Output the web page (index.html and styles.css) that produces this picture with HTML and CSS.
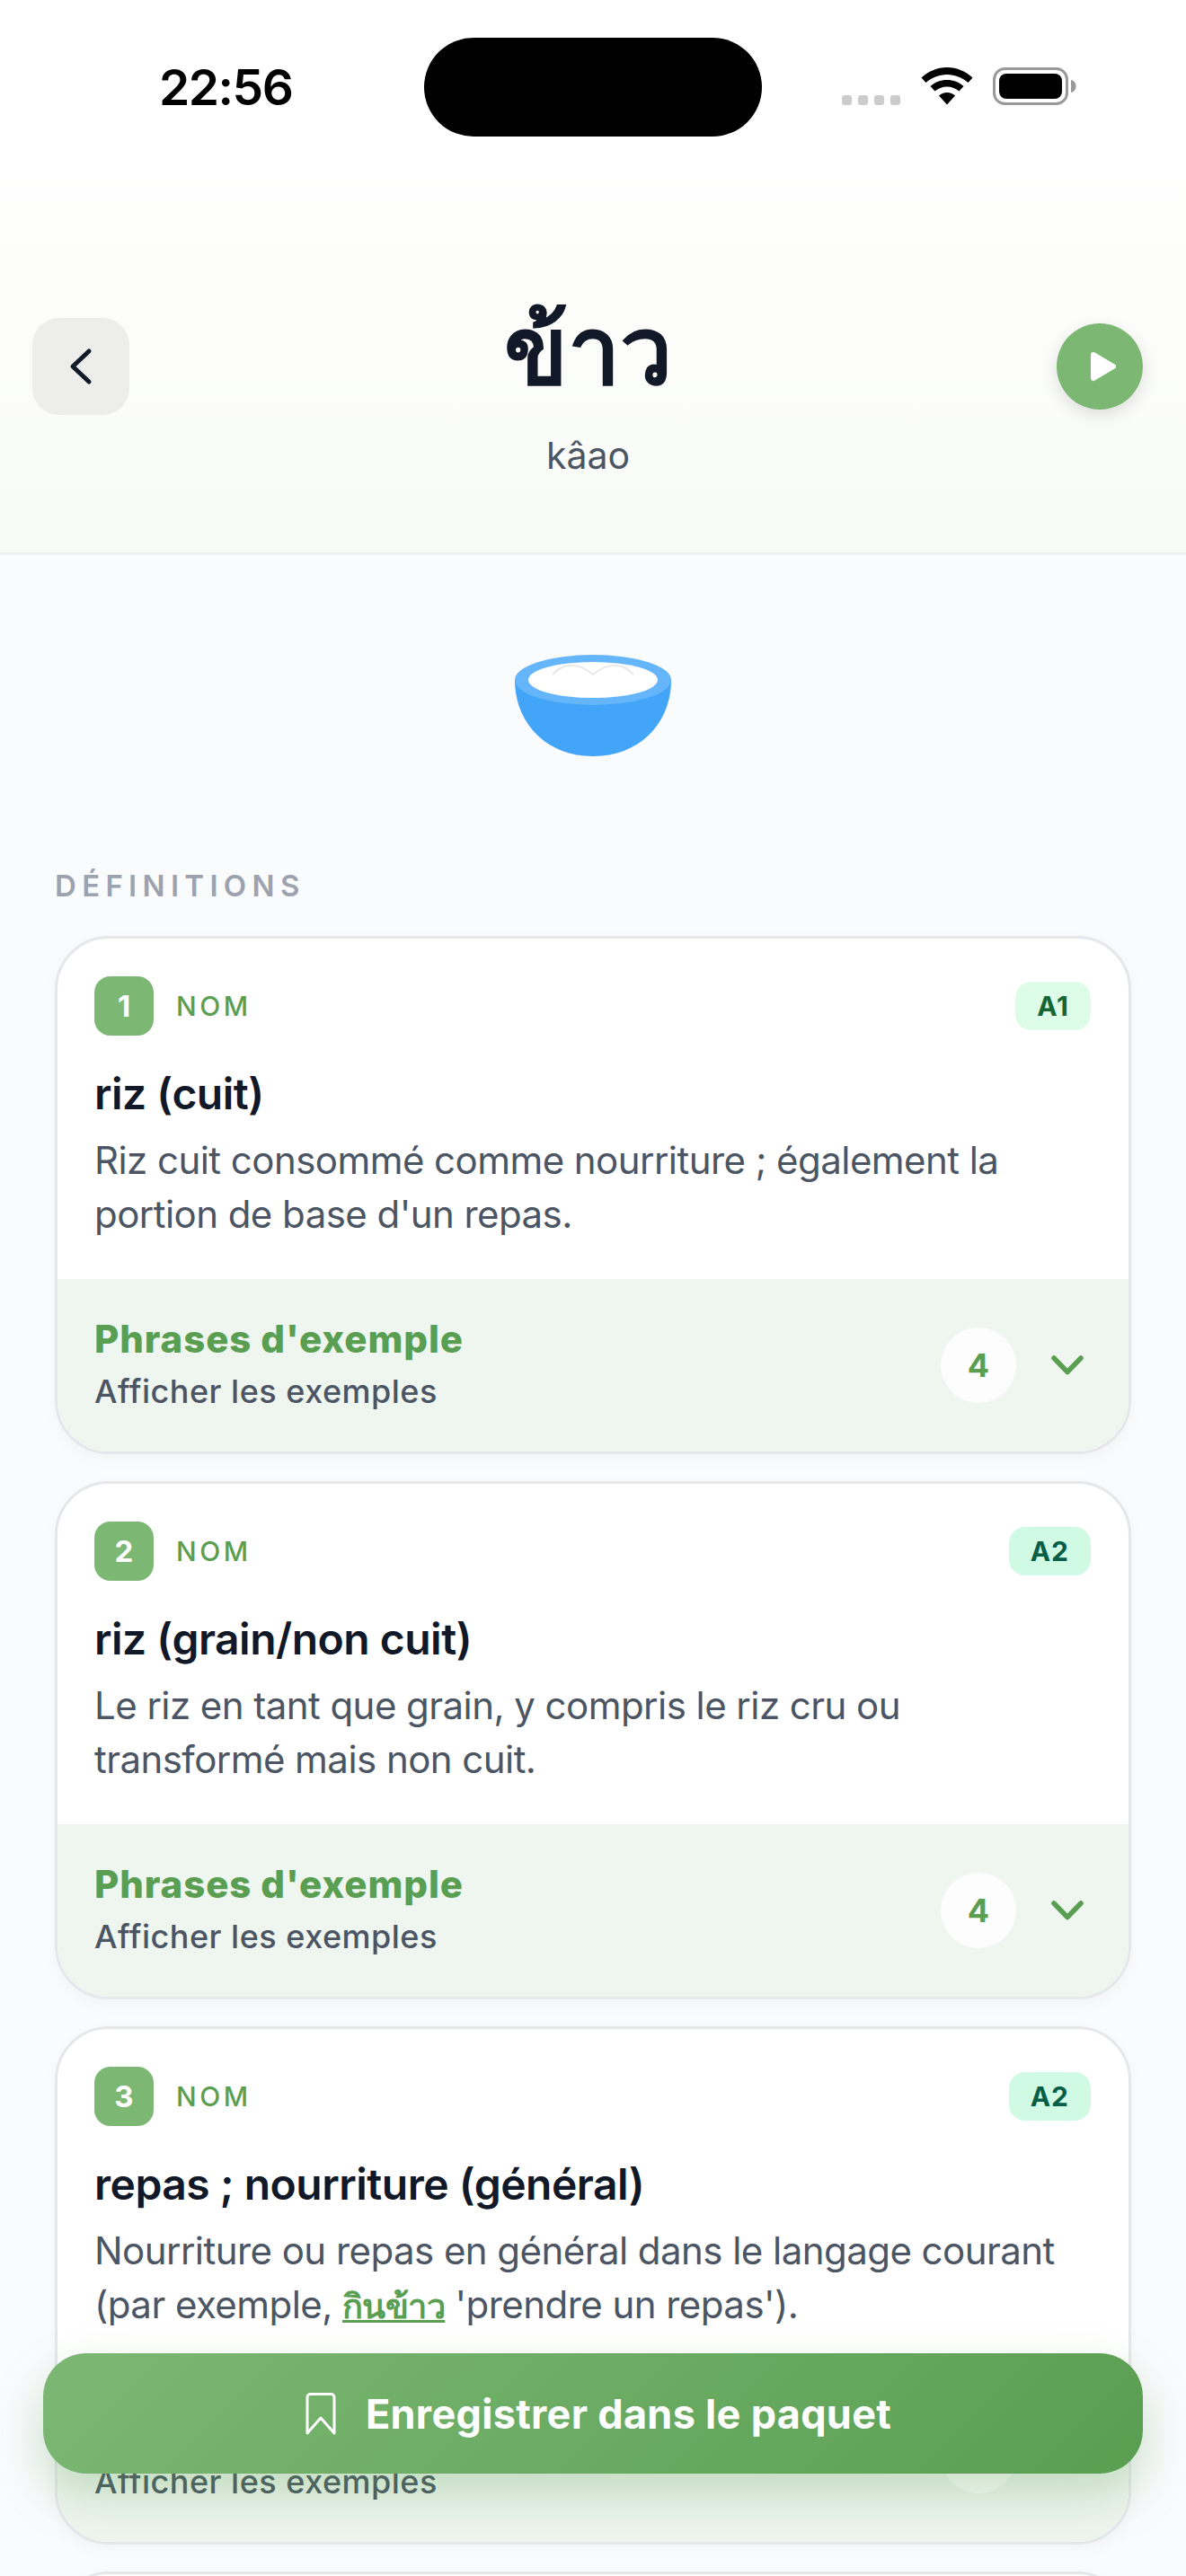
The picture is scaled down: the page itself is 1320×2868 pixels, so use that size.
FILE: index.html
```html
<!DOCTYPE html>
<html lang="fr">
<head>
<meta charset="utf-8">
<title>ข้าว</title>
<link rel="stylesheet" href="styles.css">
</head>
<body>
<div class="screen">
  <div class="top">
    <div class="status">
      <span class="time">22:56</span>
      <div class="island"></div>
      <div class="status-icons">
        <div class="signal"><i></i><i></i><i></i><i></i></div>
        <svg class="wifi" width="58" height="42" viewBox="0 0 58 42"><path d="M29 0C18 0 8 4.500 0.500 11.500L5.500 17C12 11.500 20 8 29 8C38 8 46 11.500 52.500 17L57.500 11.500C50 4.500 40 0 29 0Z"/><path d="M29 14C22 14 15.500 16.500 10.500 21L15.500 26.500C19 23.500 24 21.500 29 21.500C34 21.500 39 23.500 42.500 26.500L47.500 21C42.500 16.500 36 14 29 14Z"/><path d="M29 28C25.500 28 22.500 29.200 20 31.500L29 41.500L38 31.500C35.500 29.200 32.500 28 29 28Z"/></svg>
        <svg class="battery" width="93" height="42" viewBox="0 0 93 42"><rect x="1.500" y="1.500" width="81" height="39" rx="12" fill="none" stroke="#999" stroke-width="3"/><rect x="7" y="7" width="70" height="28" rx="8"/><path d="M87 14C90 14.500 92.500 17 92.500 21C92.500 25 90 27.500 87 28Z" fill="#999"/></svg>
      </div>
    </div>
    <header class="hero">
      <button class="back"><svg width="30" height="42" viewBox="0 0 30 42"><path d="M24 4L6 21L24 38" fill="none" stroke="#111827" stroke-width="5" stroke-linecap="round" stroke-linejoin="round"/></svg></button>
      <div class="word">
        <h1>ข้าว</h1>
        <p>kâao</p>
      </div>
      <button class="play"><svg width="30" height="34" viewBox="0 0 30 34"><path d="M4 4L26 17L4 30Z" fill="#fff" stroke="#fff" stroke-width="6" stroke-linejoin="round"/></svg></button>
    </header>
  </div>

  <div class="emoji">
    <svg width="174" height="114" viewBox="0 0 174 114">
      <path d="M0 28C0 76 35 113 87 113C139 113 174 76 174 28Z" fill="#42a5f8"/>
      <ellipse cx="87" cy="28" rx="87" ry="28" fill="#64b5f9"/>
      <ellipse cx="87" cy="28" rx="72" ry="20" fill="#fff"/>
      <path d="M42 22C55 8 72 9 87 22C102 9 119 8 132 22" fill="none" stroke="#e8e8e8" stroke-width="2"/>
    </svg>
  </div>

  <main class="content">
    <h2 class="section">Définitions</h2>

    <article class="card">
      <div class="body">
        <div class="meta">
          <span class="num">1</span><span class="pos">Nom</span>
          <span class="level a1">A1</span>
        </div>
        <h3>riz (cuit)</h3>
        <p class="def">Riz cuit consommé comme nourriture ; également la portion de base d'un repas.</p>
      </div>
      <div class="foot">
        <div class="foot-text"><strong>Phrases d'exemple</strong><span>Afficher les exemples</span></div>
        <span class="count">4</span>
        <svg class="chev" width="36" height="22" viewBox="0 0 36 22"><path d="M3 3L18 18.500L33 3" fill="none" stroke="#5a9e52" stroke-width="5.500" stroke-linecap="round" stroke-linejoin="round"/></svg>
      </div>
    </article>

    <article class="card">
      <div class="body">
        <div class="meta">
          <span class="num">2</span><span class="pos">Nom</span>
          <span class="level a2">A2</span>
        </div>
        <h3>riz (grain/non cuit)</h3>
        <p class="def">Le riz en tant que grain, y compris le riz cru ou transformé mais non cuit.</p>
      </div>
      <div class="foot">
        <div class="foot-text"><strong>Phrases d'exemple</strong><span>Afficher les exemples</span></div>
        <span class="count">4</span>
        <svg class="chev" width="36" height="22" viewBox="0 0 36 22"><path d="M3 3L18 18.500L33 3" fill="none" stroke="#5a9e52" stroke-width="5.500" stroke-linecap="round" stroke-linejoin="round"/></svg>
      </div>
    </article>

    <article class="card">
      <div class="body">
        <div class="meta">
          <span class="num">3</span><span class="pos">Nom</span>
          <span class="level a2">A2</span>
        </div>
        <h3>repas ; nourriture (général)</h3>
        <p class="def">Nourriture ou repas en général dans le langage courant (par exemple, <a class="thai-link">กินข้าว</a> 'prendre un repas').</p>
      </div>
      <div class="foot">
        <div class="foot-text"><strong>Phrases d'exemple</strong><span>Afficher les exemples</span></div>
        <span class="count">4</span>
        <svg class="chev" width="36" height="22" viewBox="0 0 36 22"><path d="M3 3L18 18.500L33 3" fill="none" stroke="#5a9e52" stroke-width="5.500" stroke-linecap="round" stroke-linejoin="round"/></svg>
      </div>
    </article>

    <article class="card"></article>
  </main>

  <button class="save">
    <svg width="36" height="48" viewBox="0 0 36 48"><path d="M3 46V6C3 4 4.500 2.500 6.500 2.500H29.500C31.500 2.500 33 4 33 6V46L18 29Z" fill="none" stroke="#fff" stroke-width="3" stroke-linejoin="round"/></svg>
    <span>Enregistrer dans le paquet</span>
  </button>
</div>
</body>
</html>
```
FILE: styles.css
```css
* { box-sizing: border-box; }
html, body { margin: 0; padding: 0; }
body { font-family: Inter, "Noto Sans", sans-serif; background: #fafbfd; color: #111827; }
.screen { position: relative; width: 1320px; height: 2868px; overflow: hidden; background: #fafbfd; }
.top { height: 618px; background: linear-gradient(180deg, #ffffff 0%, #ffffff 20%, #f9fbf7 100%); border-bottom: 3px solid #eff2ee; }
.status { position: relative; height: 150px; display: flex; justify-content: space-between; padding: 0 122px 0 177px; }
.time { font: 600 55px/1 Inter, sans-serif; letter-spacing: -1.500px; color: #000; margin-top: 70px; }
.island { position: absolute; left: 472px; top: 42px; width: 376px; height: 110px; border-radius: 55px; background: #000; }
.status-icons { display: flex; align-items: flex-start; padding-top: 75px; }
.signal { display: flex; gap: 7px; margin: 31px 23px 0 0; }
.signal i { width: 11px; height: 11px; border-radius: 3px; background: #ccc; }
.wifi { margin-right: 22px; }
.hero { position: relative; display: flex; align-items: flex-start; justify-content: space-between; padding: 204px 48px 0 36px; }
.back, .play { border: 0; padding: 0; display: flex; align-items: center; justify-content: center; }
.back { width: 108px; height: 108px; border-radius: 30px; background: #edeeec; }
.play { width: 96px; height: 96px; border-radius: 50%; background: #7cb874; box-shadow: 0 6px 18px rgba(0,0,0,.12); margin-top: 6px; }
.play svg { margin-left: 8px; }
.word { text-align: center; margin-left: -11px; margin-top: -28px; }
.word h1 { margin: 0; font-size: 104px; line-height: 126px; font-weight: 700; color: #111827; }
.word p { margin: 30px 0 0; font-size: 41px; line-height: 50px; color: #4b5563; }
.emoji { padding-top: 111px; display: flex; justify-content: center; }
.emoji svg { display: block; }
.content { padding: 0 61px; }
.section { margin: 123px 0 0 0; font-size: 33px; line-height: 40px; font-weight: 600; letter-spacing: 6.300px; color: #9ca3af; text-transform: uppercase; }
.card { height: 577px; margin-top: 30px; background: #fff; border: 3px solid #e5e7eb; border-radius: 60px; overflow: hidden; box-shadow: 0 6px 18px rgba(0,0,0,.03); display: flex; flex-direction: column; }
.section + .card { margin-top: 36px; }
.body { flex: 1; padding: 42px 42px 0 41px; }
.meta { display: flex; align-items: center; }
.num { width: 66px; height: 66px; border-radius: 18px; background: #7cb874; color: #fff; font-size: 33px; font-weight: 700; display: flex; align-items: center; justify-content: center; }
.pos { margin-left: 25px; font-size: 30px; font-weight: 500; letter-spacing: 3.500px; color: #5a9e52; text-transform: uppercase; }
.level { margin-left: auto; height: 54px; padding: 0 24px; border-radius: 18px; font-size: 30px; font-weight: 700; letter-spacing: 1px; display: flex; align-items: center; }
.a1 { background: #dcfce7; color: #166534; }
.a2 { background: #d1fae5; color: #065f46; }
h3 { margin: 35px 0 0; font-size: 48px; line-height: 60px; font-weight: 600; letter-spacing: -0.500px; color: #111827; }
.def { margin: 14px 0 0; font-size: 42px; line-height: 60px; letter-spacing: -0.550px; color: #4b5563; }
.thai-link { color: #5a9e52; font-size: 38px; font-weight: 600; line-height: 1; text-decoration: underline; }
.foot { height: 192px; background: #eff6ef; display: flex; align-items: center; padding: 0 50px 0 41px; }
.foot-text { flex: 1; display: flex; flex-direction: column; }
.foot-text strong { font-size: 42px; line-height: 54px; font-weight: 800; letter-spacing: 0.900px; color: #5a9e52; margin-top: -2px; }
.foot-text span { font-size: 36px; line-height: 50px; font-weight: 500; letter-spacing: 0.500px; color: #4b5563; margin-top: 6px; }
.count { width: 84px; height: 84px; border-radius: 50%; background: rgba(255,255,255,.8); color: #5a9e52; font-size: 36px; font-weight: 700; display: flex; align-items: center; justify-content: center; margin-right: 39px; }
.save { position: absolute; left: 48px; top: 2620px; width: 1224px; height: 134px; border: 0; padding: 0 0 0 11px; border-radius: 48px; background: linear-gradient(135deg, #7cb874, #5a9e52); box-shadow: 0 24px 54px rgba(90,158,82,.3); color: #fff; font: 700 45px Inter, sans-serif; letter-spacing: 0.300px; display: flex; align-items: center; justify-content: center; gap: 32px; }
```
